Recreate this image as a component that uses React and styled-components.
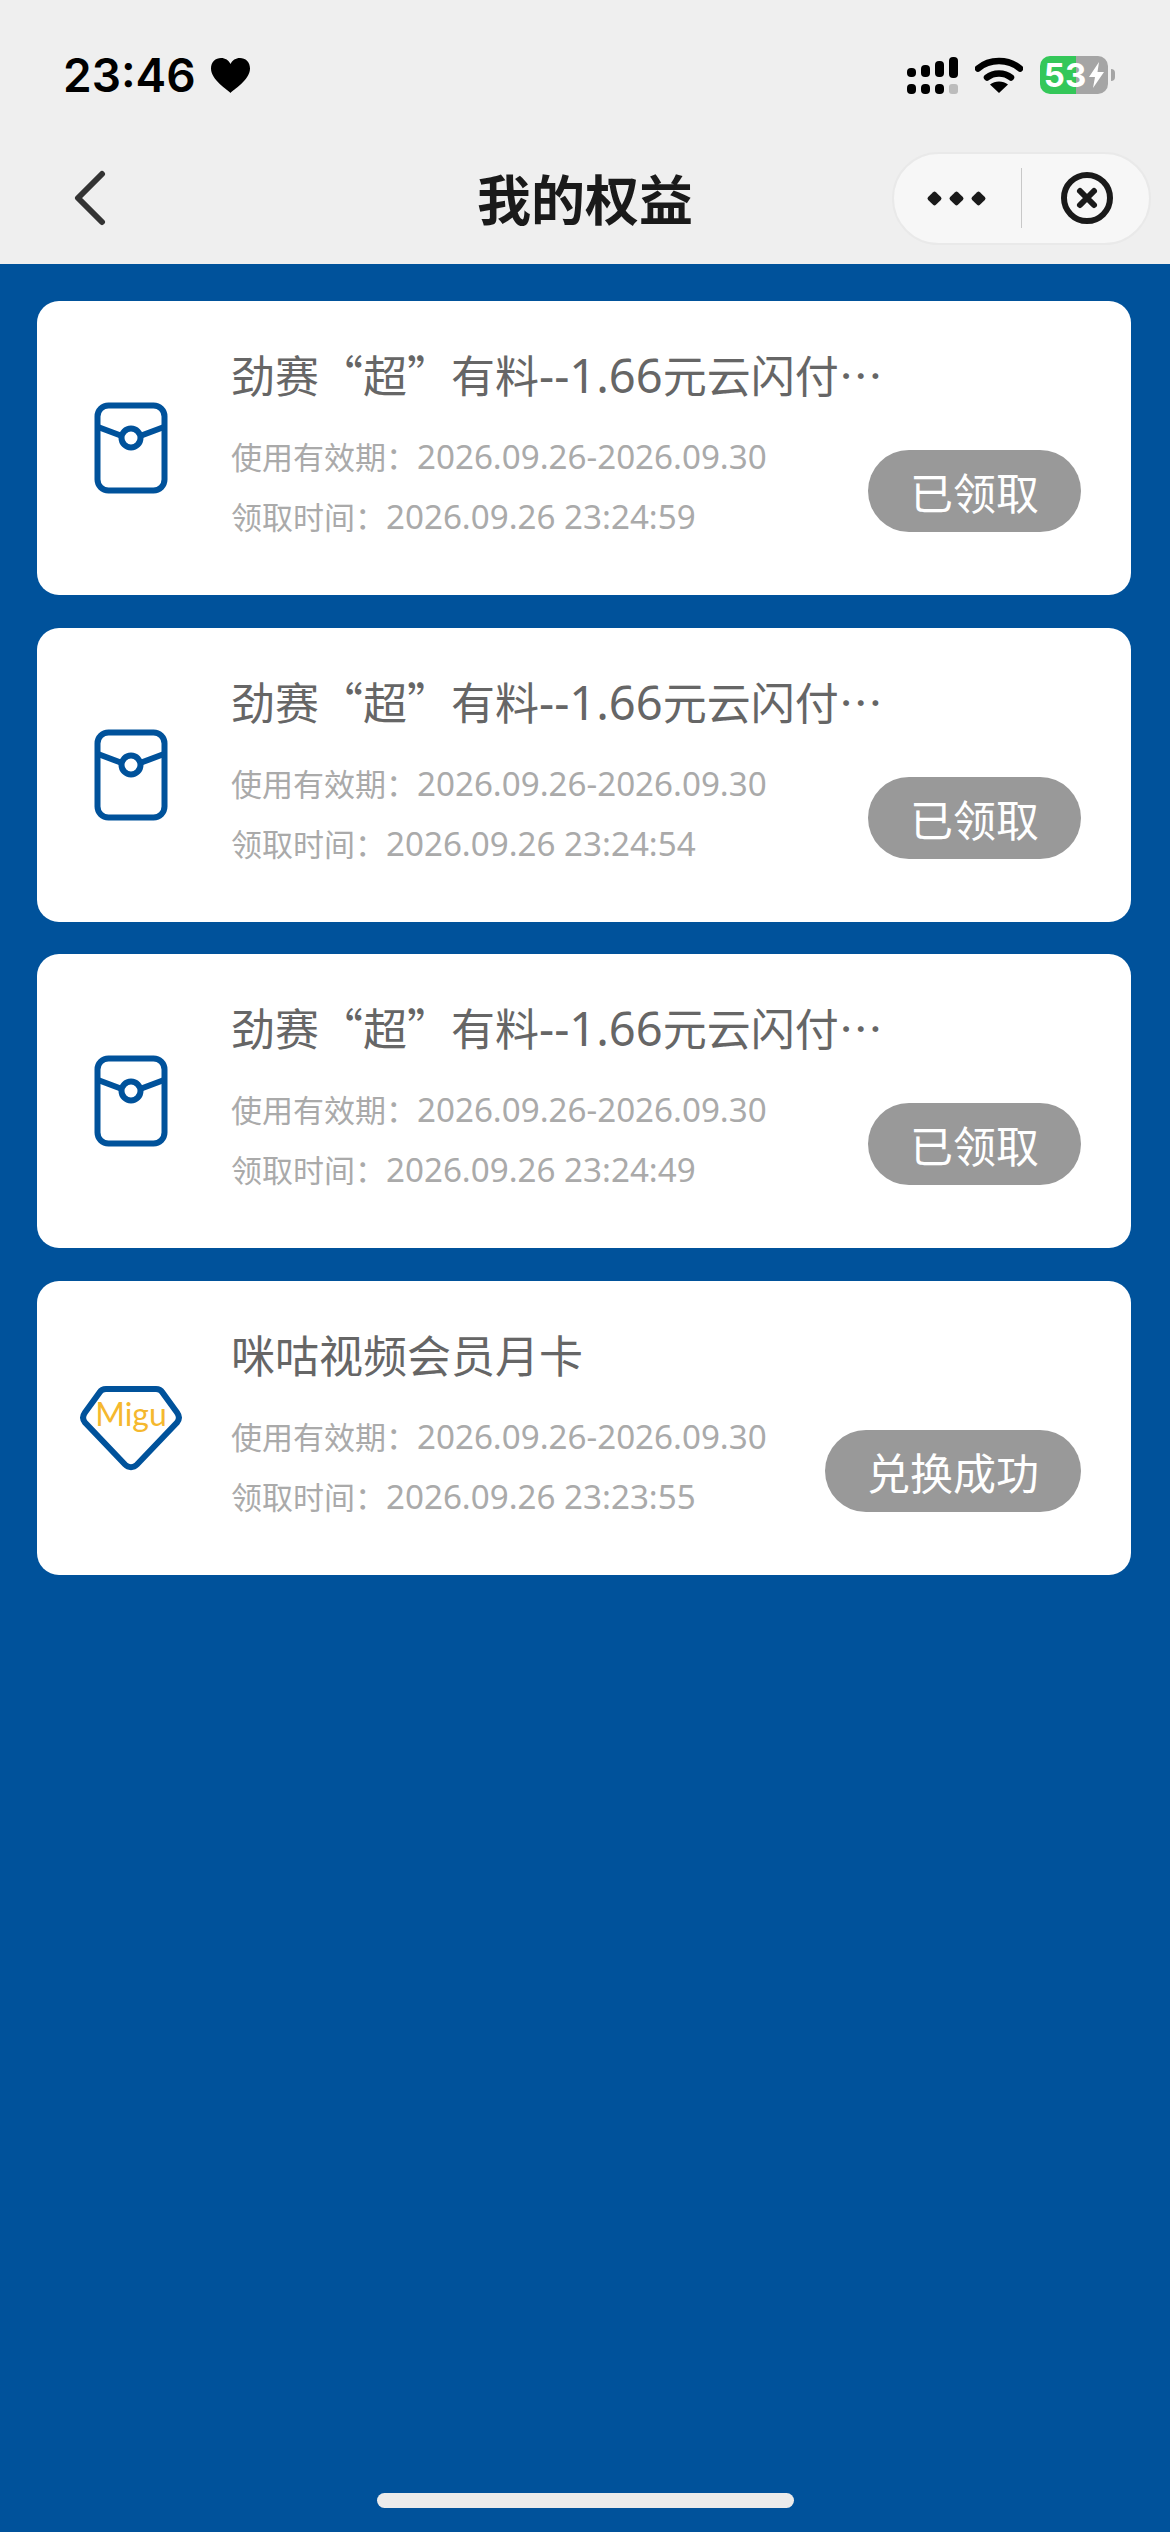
import React from "react";
import styled, { createGlobalStyle } from "styled-components";

const rewards = [
  { name: "劲赛“超”有料", amount: "--1.66", rest: "元云闪付…", claimed: "2026.09.26 23:24:59", status: "已领取", icon: "packet" },
  { name: "劲赛“超”有料", amount: "--1.66", rest: "元云闪付…", claimed: "2026.09.26 23:24:54", status: "已领取", icon: "packet" },
  { name: "劲赛“超”有料", amount: "--1.66", rest: "元云闪付…", claimed: "2026.09.26 23:24:49", status: "已领取", icon: "packet" },
  { name: "咪咕视频会员月卡", amount: "", rest: "", claimed: "2026.09.26 23:23:55", status: "兑换成功", icon: "migu" }
];

function HeartIcon() {
  return (
    <svg width="39" height="35" viewBox="0 0 39 35">
      <path d="M19.5 35C17 32 0 22 0 10.5 0 4 4.6 0 10 0c4.200 0 7.800 2.300 9.500 6C21.200 2.300 24.800 0 29 0c5.400 0 10 4 10 10.500C39 22 22 32 19.500 35z" fill="#000" />
    </svg>
  );
}

function SignalIcon() {
  return (
    <svg width="51" height="37" viewBox="0 0 51 37">
      <rect x="0" y="11" width="9" height="9" rx="4" fill="#000" />
      <rect x="14" y="8" width="9" height="12" rx="4" fill="#000" />
      <rect x="28" y="4" width="9" height="16" rx="4" fill="#000" />
      <rect x="42" y="0" width="9" height="21" rx="4" fill="#000" />
      <rect x="0" y="27" width="9" height="10" rx="4" fill="#000" />
      <rect x="14" y="27" width="9" height="10" rx="4" fill="#000" />
      <rect x="28" y="27" width="9" height="10" rx="4" fill="#000" />
      <rect x="42" y="27" width="9" height="10" rx="3" fill="#bcbcbc" />
    </svg>
  );
}

function WifiIcon() {
  return (
    <svg width="48" height="36" viewBox="0 0 48 36">
      <path d="M3 11.500C14.500 1.500 33.500 1.500 45 11.500" fill="none" stroke="#000" strokeWidth="6.500" strokeLinecap="round" />
      <path d="M12 20.500C18.500 15 29.500 15 36 20.500" fill="none" stroke="#000" strokeWidth="6.500" strokeLinecap="round" />
      <path d="M24 36L15 27.500C20 23.500 28 23.500 33 27.500z" fill="#000" />
    </svg>
  );
}

function BoltIcon() {
  return (
    <svg width="15" height="26" viewBox="0 0 15 26">
      <path d="M10 0L0 15h6l-2 11L15 10H8.500z" fill="#fff" />
    </svg>
  );
}

function BackIcon() {
  return (
    <svg width="32" height="56" viewBox="0 0 32 56">
      <path d="M28 4L4 28l24 24" fill="none" stroke="#333" strokeWidth="6" strokeLinecap="round" strokeLinejoin="round" />
    </svg>
  );
}

function CloseIcon() {
  return (
    <svg width="52" height="52" viewBox="0 0 52 52">
      <circle cx="26" cy="26" r="23" fill="none" stroke="#1a1a1a" strokeWidth="6" />
      <path d="M19 19l14 14M33 19L19 33" fill="none" stroke="#1a1a1a" strokeWidth="6" strokeLinecap="round" />
    </svg>
  );
}

function PacketIcon() {
  return (
    <svg width="74" height="92" viewBox="0 0 74 92">
      <rect x="3.500" y="3.500" width="67" height="85" rx="11" fill="none" stroke="#00529b" strokeWidth="6" />
      <path d="M4 25l24 9M70 25l-24 9" fill="none" stroke="#00529b" strokeWidth="6" />
      <circle cx="37" cy="36" r="9.500" fill="#fff" stroke="#00529b" strokeWidth="6" />
    </svg>
  );
}

function MiguIcon() {
  return (
    <svg width="102" height="86" viewBox="0 0 102 86">
      <path
        d="M26 4h50c3 0 5 1 6.500 3.500l14.500 20c2.500 3.500 2.500 7 0 10L57 79.500c-3.500 3.500-8.500 3.500-12 0L5 37.500c-2.500-3-2.500-6.500 0-10l14.500-20C21 5 23 4 26 4z"
        fill="none"
        stroke="#00529b"
        strokeWidth="6"
      />
      <MiguText x="51" y="41" textAnchor="middle">Migu</MiguText>
    </svg>
  );
}

export default function App() {
  return (
    <>
      <GlobalStyle />
      <Page>
        <Header>
          <StatusBar>
            <Clock>
              <ClockText>23:46</ClockText>
              <HeartIcon />
            </Clock>
            <StatusIcons>
              <SignalIcon />
              <WifiIcon />
              <BatteryWrap>
                <Battery>
                  <BatteryText>53</BatteryText>
                  <BoltIcon />
                </Battery>
                <BatteryNub />
              </BatteryWrap>
            </StatusIcons>
          </StatusBar>
          <NavBar>
            <BackButton>
              <BackIcon />
            </BackButton>
            <NavTitle>我的权益</NavTitle>
            <CapsuleSlot>
              <Capsule>
                <CapsulePart $first>
                  <Dot />
                  <Dot />
                  <Dot />
                </CapsulePart>
                <CapsuleDivider />
                <CapsulePart>
                  <CloseIcon />
                </CapsulePart>
              </Capsule>
            </CapsuleSlot>
          </NavBar>
        </Header>

        <List>
          {rewards.map((item, i) => (
            <Card key={i}>
              <IconSlot>{item.icon === "migu" ? <MiguIcon /> : <PacketIcon />}</IconSlot>
              <CardBody>
                <CardTitle>
                  {item.name}
                  <Latin>{item.amount}</Latin>
                  {item.rest}
                </CardTitle>
                <MetaRow>
                  <MetaLines>
                    <MetaLine>
                      使用有效期：<Latin>2026.09.26-2026.09.30</Latin>
                    </MetaLine>
                    <MetaLine>
                      领取时间：<Latin>{item.claimed}</Latin>
                    </MetaLine>
                  </MetaLines>
                  <StatusPill>{item.status}</StatusPill>
                </MetaRow>
              </CardBody>
            </Card>
          ))}
        </List>

        <HomeBar>
          <HomeIndicator />
        </HomeBar>
      </Page>
    </>
  );
}

const GlobalStyle = createGlobalStyle`
  html, body {
    margin: 0;
    padding: 0;
    background: #00529b;
  }
  body {
    font-family: "Noto Sans CJK SC", "Noto Sans", sans-serif;
  }
`;

const Page = styled.div`
  width: 1170px;
  height: 2532px;
  display: flex;
  flex-direction: column;
  background: #00529b;
  overflow: hidden;
`;

const Header = styled.header`
  height: 264px;
  background: #efefef;
  display: flex;
  flex-direction: column;
`;

const StatusBar = styled.div`
  height: 120px;
  box-sizing: border-box;
  padding: 30px 55px 0 63px;
  display: flex;
  align-items: center;
  justify-content: space-between;
`;

const Clock = styled.div`
  display: flex;
  align-items: center;
  gap: 15px;
`;

const ClockText = styled.span`
  font-family: Inter, Roboto, sans-serif;
  font-size: 46px;
  font-weight: 600;
  line-height: 1;
  color: #000;
`;

const StatusIcons = styled.div`
  display: flex;
  align-items: center;
  gap: 17px;
`;

const BatteryWrap = styled.div`
  display: flex;
  align-items: center;
  gap: 3px;
`;

const Battery = styled.div`
  width: 68px;
  height: 38px;
  border-radius: 10px;
  background: linear-gradient(90deg, #34c759 53%, #a5a5a5 53%);
  display: flex;
  align-items: center;
  justify-content: center;
  gap: 3px;
`;

const BatteryText = styled.span`
  font-family: Inter, Roboto, sans-serif;
  font-size: 33px;
  font-weight: 700;
  line-height: 1;
  color: #fff;
`;

const BatteryNub = styled.div`
  width: 4px;
  height: 12px;
  border-radius: 0 4px 4px 0;
  background: #a5a5a5;
`;

const NavBar = styled.nav`
  height: 144px;
  box-sizing: border-box;
  padding-top: 12px;
  display: grid;
  grid-template-columns: 1fr auto 1fr;
  align-items: center;
`;

const BackButton = styled.div`
  padding-left: 74px;
  display: flex;
`;

const NavTitle = styled.h1`
  margin: 0;
  font-size: 54px;
  font-weight: 700;
  line-height: 1;
  color: #1a1a1a;
`;

const CapsuleSlot = styled.div`
  padding-right: 19px;
  display: flex;
  justify-content: flex-end;
`;

const Capsule = styled.div`
  width: 259px;
  height: 93px;
  box-sizing: border-box;
  border: 2px solid #e9e9e9;
  border-radius: 47px;
  background: #f7f7f7;
  display: flex;
  align-items: center;
`;

const CapsulePart = styled.div`
  flex: 1;
  box-sizing: border-box;
  padding: ${props => (props.$first ? "0 3px 0 0" : "0 0 0 3px")};
  display: flex;
  align-items: center;
  justify-content: center;
  gap: 8px;
`;

const CapsuleDivider = styled.div`
  width: 1px;
  height: 60px;
  background: #c8c8c8;
`;

const Dot = styled.span`
  width: 11px;
  height: 11px;
  margin: 1.5px;
  background: #1a1a1a;
  border-radius: 2px;
  transform: rotate(45deg);
`;

const List = styled.main`
  flex: 1;
  padding: 37px 39px 0 37px;
  display: flex;
  flex-direction: column;
  gap: 32.5px;
`;

const Card = styled.article`
  height: 294px;
  flex-shrink: 0;
  border-radius: 22px;
  background: #fff;
  display: flex;
`;

const IconSlot = styled.div`
  width: 194px;
  box-sizing: border-box;
  padding-right: 6px;
  flex-shrink: 0;
  display: flex;
  align-items: center;
  justify-content: center;
`;

const CardBody = styled.div`
  flex: 1;
  min-width: 0;
  padding: 43px 50px 0 0;
  display: flex;
  flex-direction: column;
`;

const CardTitle = styled.div`
  font-size: 44px;
  line-height: 60px;
  color: #666;
  white-space: nowrap;
`;

const Latin = styled.span`
  font-family: "Noto Sans", sans-serif;
  font-size: 1.07em;
`;

const MetaRow = styled.div`
  margin-top: 30px;
  display: flex;
  align-items: center;
  justify-content: space-between;
`;

const MetaLines = styled.div`
  display: flex;
  flex-direction: column;
  gap: 17px;
`;

const MetaLine = styled.div`
  font-size: 31px;
  line-height: 42px;
  color: #aaa;
  white-space: nowrap;
`;

const StatusPill = styled.div`
  height: 82px;
  margin-top: 9px;
  padding: 0 42px;
  border-radius: 41px;
  background: #999;
  color: #fff;
  font-size: 43px;
  line-height: 82px;
  white-space: nowrap;
`;

const HomeBar = styled.div`
  padding-bottom: 24px;
  display: flex;
  justify-content: center;
`;

const HomeIndicator = styled.div`
  width: 417px;
  height: 15px;
  border-radius: 8px;
  background: #ebebeb;
`;

const MiguText = styled.text`
  font-family: Lato, "Noto Sans", sans-serif;
  font-size: 32px;
  font-weight: 400;
  fill: #f5b82e;
`;
